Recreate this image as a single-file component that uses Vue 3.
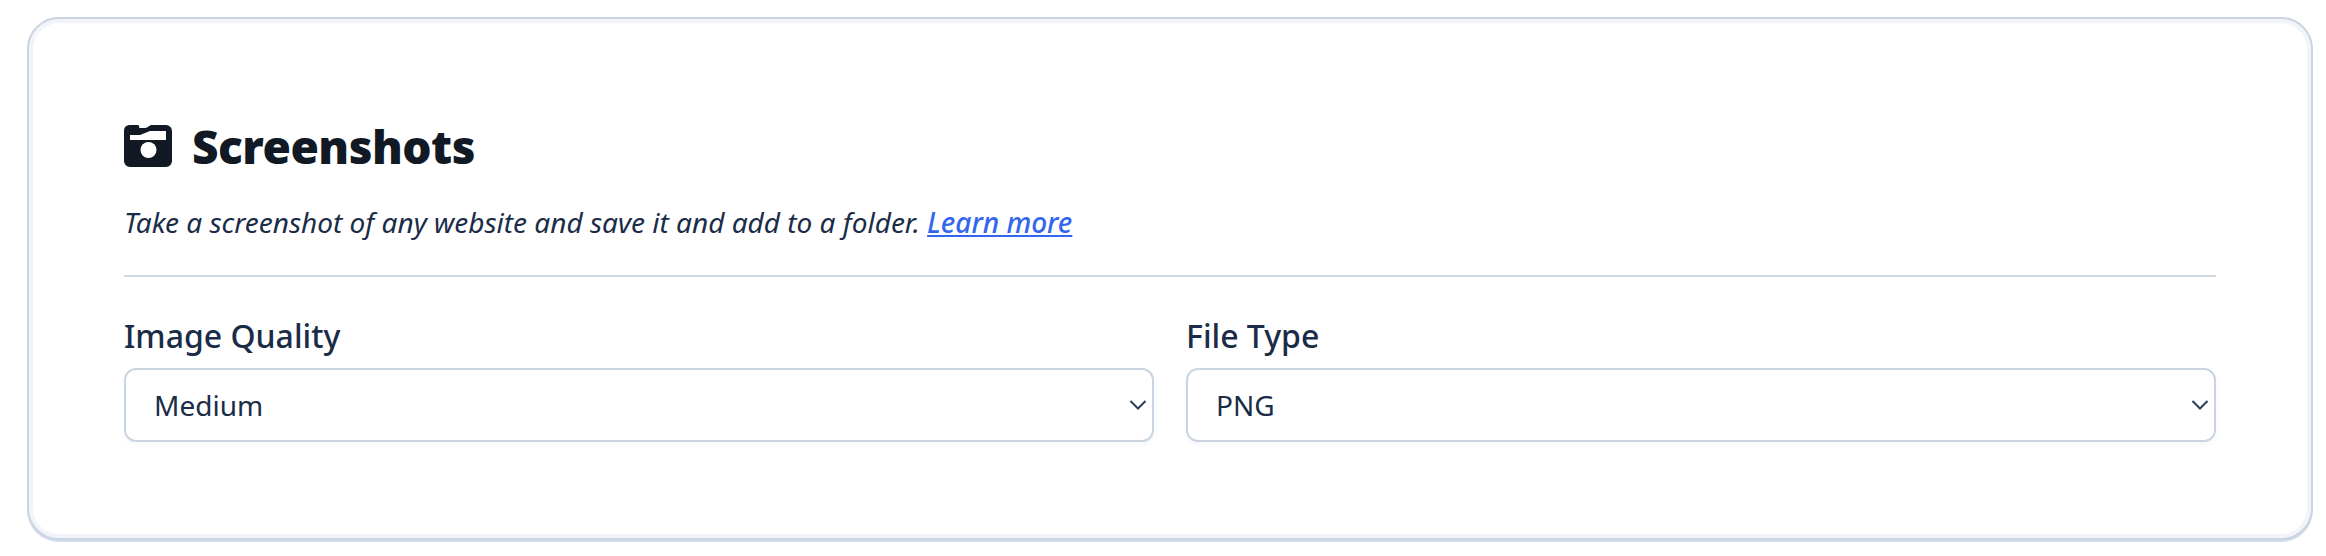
<template>
  <div class="page">
    <section class="card">
      <h2 class="title">
        <!-- camera icon -->
        <svg class="title-icon" viewBox="0 0 48 42">
          <path d="M5 0h8a2 2 0 0 1 2 3H22L27 0H42a6 6 0 0 1 6 6V36a6 6 0 0 1-6 6H6a6 6 0 0 1-6-6V6a6 6 0 0 1 5-6z" fill="#101924" />
          <path d="M6 10H16L26 6H42V15H6z" fill="#fff" />
          <circle cx="24.500" cy="25" r="8" fill="#fff" />
        </svg>
        Screenshots
      </h2>
      <p class="intro">
        Take a screenshot of any website and save it and add to a folder.
        <a href="#" class="link">Learn more</a>
      </p>
      <div class="fields">
        <label class="field">
          <span class="field-label">Image Quality</span>
          <span class="select-wrap">
            <select v-model="quality" class="select">
              <option v-for="opt in qualities" :key="opt">{{ opt }}</option>
            </select>
            <svg class="chevron" viewBox="0 0 18 12">
              <path d="M1.500 2L9 9.500L16.500 2" fill="none" stroke="#2c3e57" stroke-width="2" />
            </svg>
          </span>
        </label>
        <label class="field">
          <span class="field-label">File Type</span>
          <span class="select-wrap">
            <select v-model="fileType" class="select">
              <option v-for="opt in fileTypes" :key="opt">{{ opt }}</option>
            </select>
            <svg class="chevron" viewBox="0 0 18 12">
              <path d="M1.500 2L9 9.500L16.500 2" fill="none" stroke="#2c3e57" stroke-width="2" />
            </svg>
          </span>
        </label>
      </div>
    </section>
  </div>
</template>

<script setup>
import { ref } from 'vue'

const qualities = ['Low', 'Medium', 'High']
const fileTypes = ['PNG', 'JPEG', 'WEBP']

const quality = ref('Medium')
const fileType = ref('PNG')
</script>

<style>
body {
  margin: 0;
  background: #fff;
}
</style>

<style scoped>
.page {
  box-sizing: border-box;
  width: 2326px;
  height: 556px;
  padding: 17px 13px 16px 27px;
  font-family: "Noto Sans", sans-serif;
}

.card {
  box-sizing: border-box;
  height: 523px;
  padding: 106px 95px 0;
  background: #fff;
  border: 2px solid #cbd5e1;
  border-radius: 32px;
  box-shadow: inset 0 0 0 4px #f1f5f9, 0 2px 0 #d3daec;
}

.title {
  display: flex;
  align-items: center;
  gap: 20px;
  margin: 0;
  height: 42px;
  font-size: 46px;
  font-weight: 900;
  letter-spacing: -0.5px;
  color: #101924;
}

.title-icon {
  width: 48px;
  height: 42px;
  flex: none;
}

.intro {
  margin: 34px 0 0;
  padding-bottom: 32px;
  border-bottom: 2px solid #cfd8e3;
  font-size: 28px;
  line-height: 42px;
  font-style: italic;
  color: #1a2c47;
}

.link {
  color: #3366ee;
  font-weight: 500;
}

.fields {
  display: grid;
  grid-template-columns: 1fr 1fr;
  gap: 32px;
  margin-top: 36px;
}

.field {
  display: block;
}

.field-label {
  display: block;
  height: 46px;
  font-size: 32px;
  line-height: 46px;
  font-weight: 500;
  color: #1a2c47;
}

.select-wrap {
  position: relative;
  display: block;
  margin-top: 9px;
}

.select {
  display: block;
  box-sizing: border-box;
  width: 100%;
  height: 74px;
  padding: 0 28px;
  appearance: none;
  background: #fff;
  border: 2px solid #cbd5e1;
  border-radius: 12px;
  box-shadow: 0 2px 4px rgba(148, 163, 184, 0.1);
  font-family: inherit;
  font-size: 28px;
  color: #1a2c47;
}

.chevron {
  position: absolute;
  right: 7px;
  top: 31px;
  width: 18px;
  height: 12px;
  pointer-events: none;
}
</style>
